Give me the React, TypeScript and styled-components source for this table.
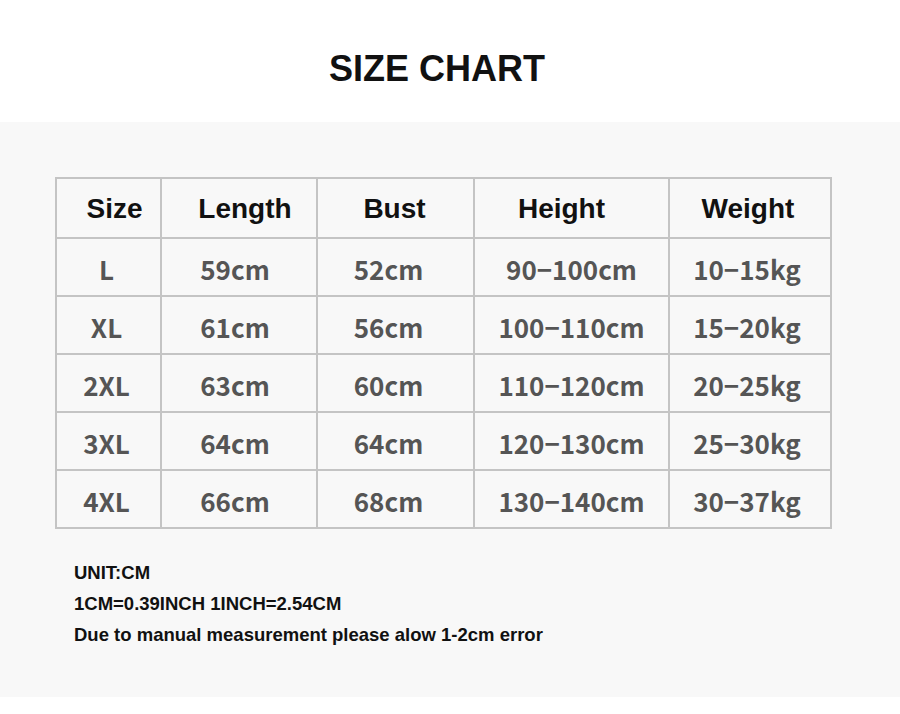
import React from "react";
import styled, { createGlobalStyle } from "styled-components";

const GlobalStyle = createGlobalStyle`
  html, body {
    margin: 0;
    padding: 0;
    background: #ffffff;
  }
  body {
    font-family: "Liberation Sans", Arial, sans-serif;
  }
`;

const Page = styled.div`
  width: 900px;
  height: 714px;
  display: flex;
  flex-direction: column;
  background: #ffffff;
`;

const TitleBar = styled.div`
  height: 122px;
  display: flex;
  align-items: flex-start;
  justify-content: center;
  padding: 47px 26px 0 0;
  box-sizing: border-box;
`;

const Title = styled.h1`
  margin: 0;
  font-size: 36px;
  line-height: 44px;
  font-weight: bold;
  color: #111;
`;

const Panel = styled.div`
  height: 575px;
  background: #f8f8f8;
  padding: 55px 0 0 55px;
  box-sizing: border-box;
`;

const Table = styled.table`
  border-collapse: collapse;
  table-layout: fixed;
`;

// shift nudges the text off the exact centre, as in the chart image
const HeadCell = styled.th<{ w: number; shift: number }>`
  width: ${(p) => p.w - Math.abs(p.shift) * 2}px;
  height: 56px;
  border: 2px solid #c4c4c4;
  font-family: "Liberation Sans", Arial, sans-serif;
  font-size: 28px;
  font-weight: bold;
  color: #111;
  text-align: center;
  padding: 2px ${(p) => (p.shift < 0 ? -p.shift * 2 : 0)}px 0
    ${(p) => (p.shift > 0 ? p.shift * 2 : 0)}px;
`;

const Cell = styled.td<{ shift: number }>`
  height: 53px;
  border: 2px solid #c4c4c4;
  font-family: "Noto Sans CJK SC", "Noto Sans", sans-serif;
  font-size: 26px;
  font-weight: 700;
  color: #555;
  text-align: center;
  padding: 3px ${(p) => (p.shift < 0 ? -p.shift * 2 : 0)}px 0
    ${(p) => (p.shift > 0 ? p.shift * 2 : 0)}px;
`;

const Notes = styled.div`
  margin-top: 33px;
  padding-left: 19px;
  display: flex;
  flex-direction: column;
  gap: 9px;
`;

const Note = styled.div`
  font-size: 18.5px;
  font-weight: bold;
  color: #111;
  line-height: 22px;
`;

const columns = [
  { label: "Size", w: 103, head: 6, body: -2 },
  { label: "Length", w: 154, head: 6, body: -4 },
  { label: "Bust", w: 155, head: -1, body: -7 },
  { label: "Height", w: 193, head: -10, body: 0 },
  { label: "Weight", w: 160, head: -2, body: -3 },
];

const rows = [
  ["L", "59cm", "52cm", "90-100cm", "10-15kg"],
  ["XL", "61cm", "56cm", "100-110cm", "15-20kg"],
  ["2XL", "63cm", "60cm", "110-120cm", "20-25kg"],
  ["3XL", "64cm", "64cm", "120-130cm", "25-30kg"],
  ["4XL", "66cm", "68cm", "130-140cm", "30-37kg"],
];

const App = () => {
  return (
    <>
      <GlobalStyle />
      <Page>
        <TitleBar>
          <Title>SIZE CHART</Title>
        </TitleBar>
        <Panel>
          <Table>
            <thead>
              <tr>
                {columns.map((c) => (
                  <HeadCell key={c.label} w={c.w} shift={c.head}>
                    {c.label}
                  </HeadCell>
                ))}
              </tr>
            </thead>
            <tbody>
              {rows.map((r) => (
                <tr key={r[0]}>
                  {r.map((v, i) => (
                    <Cell key={i} shift={columns[i].body}>
                      {v.replace("-", "\u2212")}
                    </Cell>
                  ))}
                </tr>
              ))}
            </tbody>
          </Table>
          <Notes>
            <Note>UNIT:CM</Note>
            <Note>1CM=0.39INCH 1INCH=2.54CM</Note>
            <Note>Due to manual measurement please alow 1-2cm error</Note>
          </Notes>
        </Panel>
      </Page>
    </>
  );
};

export default App;
